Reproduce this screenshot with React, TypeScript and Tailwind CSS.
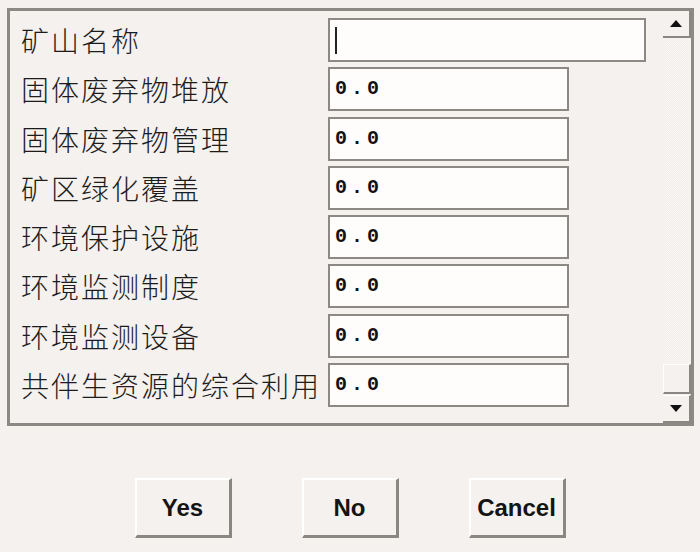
const fields: { label: string; value: string; wide?: boolean }[] = [
  { label: "矿山名称", value: "", wide: true },
  { label: "固体废弃物堆放", value: "0.0" },
  { label: "固体废弃物管理", value: "0.0" },
  { label: "矿区绿化覆盖", value: "0.0" },
  { label: "环境保护设施", value: "0.0" },
  { label: "环境监测制度", value: "0.0" },
  { label: "环境监测设备", value: "0.0" },
  { label: "共伴生资源的综合利用", value: "0.0" },
];

const cjk = { fontFamily: '"Noto Sans CJK SC", "Noto Sans", sans-serif' };
const mono = { fontFamily: '"Liberation Mono", "DejaVu Sans Mono", monospace' };
const sans = { fontFamily: '"Liberation Sans", Arial, sans-serif' };

function Arrow({ down }: { down?: boolean }) {
  return (
    <svg width="12" height="7" viewBox="0 0 12 7">
      <path d={down ? "M0 0 H12 L6 7 Z" : "M0 7 H12 L6 0 Z"} fill="#111" />
    </svg>
  );
}

function ScrollBar() {
  return (
    <div className="flex w-[28px] shrink-0 flex-col">
      <div className="flex h-[27px] items-center justify-center border-b-2 border-r-2 border-b-[#8a8682] border-r-[#8a8682] bg-[#f4f1ee]">
        <Arrow />
      </div>
      <div className="flex-1 bg-[#f8f6f4] bg-[repeating-conic-gradient(#f9f7f5_0_25%,#f1eeeb_0_50%)] bg-[length:2px_2px]" />
      <div className="h-[30px] border-b-2 border-l border-r-2 border-t border-b-[#8a8682] border-l-white border-r-[#8a8682] border-t-white bg-[#f4f1ee]" />
      <div className="mt-[1px] flex h-[28px] items-center justify-center border-b-2 border-r-2 border-t border-b-[#8a8682] border-r-[#8a8682] border-t-white bg-[#f4f1ee]">
        <Arrow down />
      </div>
    </div>
  );
}

export default function App() {
  return (
    <div className="h-[552px] w-[700px] overflow-hidden bg-[#f4f1ee] pt-[8px]">
      <div className="ml-[7px] flex h-[418px] w-[687px] border-[3px] border-[#8c8884] bg-[#f4f1ee]">
        <div className="flex flex-1 flex-col gap-[5.3px] pt-[7px]">
          {fields.map((f) => (
            <div key={f.label} className="flex h-[44px] items-center">
              <div
                className="w-[318px] shrink-0 pl-[11px] text-[28px] font-light leading-none tracking-[2px] text-[#1c1c1c]"
                style={cjk}
              >
                {f.label}
              </div>
              <div
                className={`flex h-[44px] items-center border-2 border-[#8c8884] bg-[#fefdfc] pl-[5px] ${
                  f.wide ? "w-[318px]" : "w-[241px]"
                }`}
              >
                {f.wide ? (
                  <span className="ml-[0px] h-[27px] w-[2px] bg-[#222]" />
                ) : (
                  <span
                    className="text-[20px] font-bold leading-none tracking-[4px] text-[#111]"
                    style={mono}
                  >
                    {f.value}
                  </span>
                )}
              </div>
            </div>
          ))}
        </div>
        <ScrollBar />
      </div>

      <div className="mt-[52px] flex justify-center gap-[70px]">
        {["Yes", "No", "Cancel"].map((b) => (
          <button
            key={b}
            className="flex h-[60px] w-[97px] items-center justify-center border-2 border-b-[3px] border-r-[3px] border-b-[#8a8682] border-l-white border-r-[#8a8682] border-t-white bg-[#f4f1ee] text-[24px] font-bold text-[#141414]"
            style={sans}
          >
            {b}
          </button>
        ))}
      </div>
    </div>
  );
}
